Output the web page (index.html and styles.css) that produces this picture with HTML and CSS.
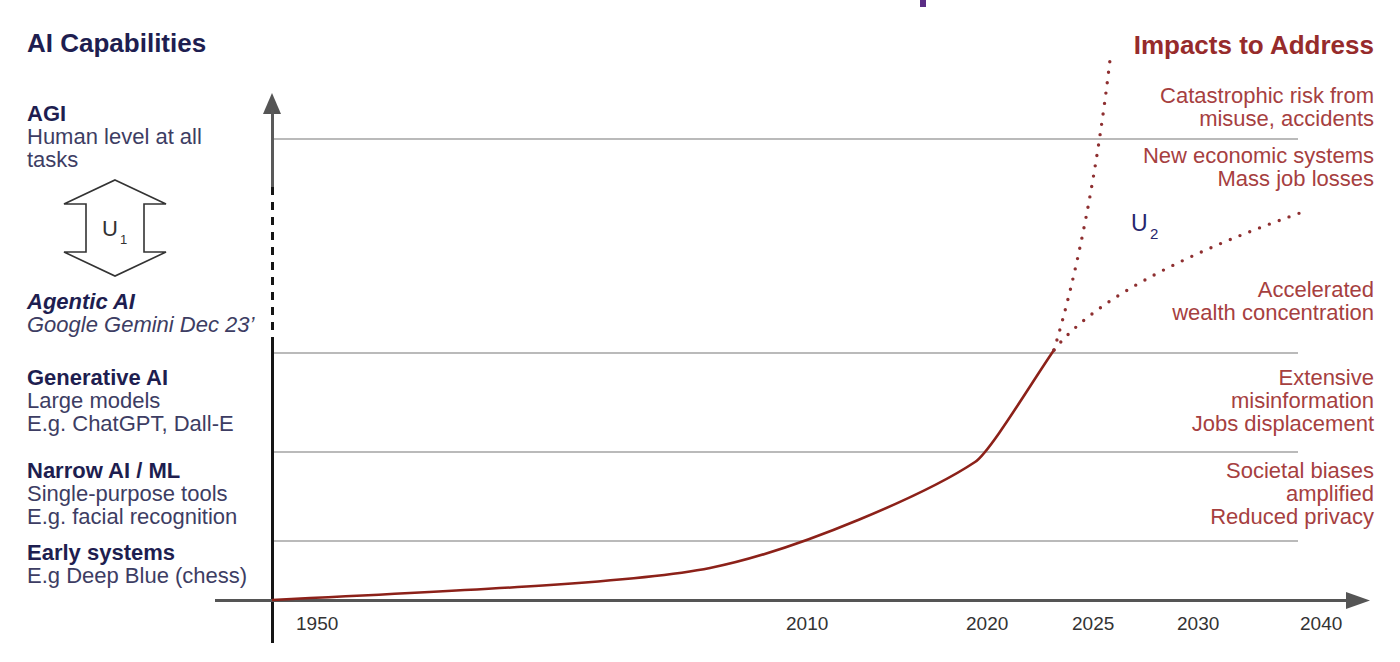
FILE: index.html
```html
<!DOCTYPE html>
<html lang="en">
<head>
<meta charset="utf-8">
<title>AI Capabilities and Impacts</title>
<link rel="stylesheet" href="styles.css">
</head>
<body>
<div class="stage">
  <svg class="chart" viewBox="0 0 1400 662" width="1400" height="662" aria-hidden="true">
    <!-- grid lines -->
    <g class="grid">
      <line x1="272" y1="139" x2="1298" y2="139"/>
      <line x1="272" y1="353" x2="1298" y2="353"/>
      <line x1="272" y1="452" x2="1298" y2="452"/>
      <line x1="272" y1="541" x2="1298" y2="541"/>
    </g>
    <!-- y axis -->
    <polygon class="axis-head" points="272,93 263,114 281,114"/>
    <line class="axis-grey" x1="272.5" y1="110" x2="272.5" y2="187"/>
    <line class="axis-dash" x1="272.5" y1="187" x2="272.5" y2="338"/>
    <line class="axis-black" x1="272.5" y1="338" x2="272.5" y2="643"/>
    <!-- x axis -->
    <line class="axis-x" x1="215" y1="600.5" x2="1350" y2="600.5"/>
    <polygon class="axis-head" points="1346,592 1370,600.5 1346,609"/>
    <!-- growth curve -->
    <path class="curve" d="M272,600 C480,590 640,582 710,568 C800,550 930,492 975,462 C990,452 1030,385 1054,350"/>
    <!-- projections -->
    <path class="dots" d="M1054,350 Q1090,230 1110,60"/>
    <path class="dots" d="M1054,350 Q1110,280 1300,213"/>
    <!-- labels -->
    <text class="u-label" x="1131" y="231">U</text>
    <text class="u-sub" x="1150" y="239">2</text>
    <g class="years">
      <text x="296" y="630">1950</text>
      <text x="786" y="630">2010</text>
      <text x="966" y="630">2020</text>
      <text x="1072" y="630">2025</text>
      <text x="1177" y="630">2030</text>
      <text x="1300" y="630">2040</text>
    </g>
  </svg>

  <div class="left">
    <h2 class="col-title">AI Capabilities</h2>
    <div class="level lvl-agi">
      <div class="lvl-name">AGI</div>
      <div>Human level at all<br>tasks</div>
    </div>
    <svg class="u1" viewBox="27 171 150 119" width="150" height="119" aria-hidden="true">
      <polygon points="115,180 166,204 144,204 144,252 166,252 115,276 64,252 86,252 86,204 64,204"/>
      <text class="u1-label" x="102" y="236">U</text>
      <text class="u1-sub" x="120" y="244">1</text>
    </svg>
    <div class="level lvl-agentic">
      <div class="lvl-name">Agentic AI</div>
      <div>Google Gemini Dec 23’</div>
    </div>
    <div class="level lvl-gen">
      <div class="lvl-name">Generative AI</div>
      <div>Large models<br>E.g. ChatGPT, Dall-E</div>
    </div>
    <div class="level lvl-narrow">
      <div class="lvl-name">Narrow AI / ML</div>
      <div>Single-purpose tools<br>E.g. facial recognition</div>
    </div>
    <div class="level lvl-early">
      <div class="lvl-name">Early systems</div>
      <div>E.g Deep Blue (chess)</div>
    </div>
  </div>

  <div class="mid">
    <div class="title-stub"></div>
  </div>

  <div class="right">
    <h2 class="col-title impacts-title">Impacts to Address</h2>
    <p class="impact imp-cat">Catastrophic risk from<br>misuse, accidents</p>
    <p class="impact imp-econ">New economic systems<br>Mass job losses</p>
    <p class="impact imp-wealth">Accelerated<br>wealth concentration</p>
    <p class="impact imp-info">Extensive<br>misinformation<br>Jobs displacement</p>
    <p class="impact imp-bias">Societal biases<br>amplified<br>Reduced privacy</p>
  </div>
</div>
</body>
</html>
```

FILE: styles.css
```css
* { box-sizing: border-box; }

html, body {
  margin: 0;
  padding: 0;
  background: #ffffff;
}

body {
  font-family: "Liberation Sans", Arial, Helvetica, sans-serif;
}

.stage {
  width: 1400px;
  height: 662px;
  overflow: hidden;
  display: grid;
  grid-template-columns: 272px 828px 300px;
  grid-template-rows: 662px;
}

.chart {
  grid-column: 1 / 4;
  grid-row: 1;
  display: block;
}

/* chart strokes */
.grid line {
  stroke: #a3a3a3;
  stroke-width: 1.6;
}
.axis-head { fill: #555555; }
.axis-grey { stroke: #5a5a5a; stroke-width: 3; }
.axis-dash { stroke: #151515; stroke-width: 3; stroke-dasharray: 8 7; }
.axis-black { stroke: #151515; stroke-width: 3; }
.axis-x { stroke: #555555; stroke-width: 3; }

.curve {
  fill: none;
  stroke: #8c2119;
  stroke-width: 2.6;
}
.dots {
  fill: none;
  stroke: #8e2f30;
  stroke-width: 3.4;
  stroke-linecap: round;
  stroke-dasharray: 0 10.5;
}

.u-label {
  font-family: "Liberation Sans", Arial, sans-serif;
  font-size: 23px;
  fill: #26266e;
}
.u-sub {
  font-family: "Liberation Sans", Arial, sans-serif;
  font-size: 15px;
  fill: #26266e;
}

.years text {
  font-family: "Liberation Sans", Arial, sans-serif;
  font-size: 19px;
  fill: #333333;
}

/* left column */
.left {
  grid-column: 1;
  grid-row: 1;
  padding-left: 27px;
  display: flex;
  flex-direction: column;
  font-size: 22px;
  line-height: 23px;
  color: #3d3d63;
  white-space: nowrap;
}

.col-title {
  margin: 28px 0 0 0;
  font-size: 26px;
  line-height: 30px;
  font-weight: bold;
  color: #1e1e50;
}

.lvl-name {
  font-weight: bold;
  color: #1e1e50;
}

.lvl-agi { margin-top: 44px; }
.lvl-agentic { font-style: italic; }
.lvl-gen { margin-top: 30px; }
.lvl-narrow { margin-top: 24px; }
.lvl-early { margin-top: 13px; }

.u1 {
  display: block;
}
.u1 polygon {
  fill: #ffffff;
  stroke: #333333;
  stroke-width: 1.6;
  stroke-linejoin: miter;
}
.u1-label {
  font-family: "Liberation Sans", Arial, sans-serif;
  font-size: 22px;
  fill: #333333;
}
.u1-sub {
  font-family: "Liberation Sans", Arial, sans-serif;
  font-size: 13px;
  fill: #333333;
}

/* middle stub of the cropped slide title */
.mid {
  grid-column: 2;
  grid-row: 1;
}
.title-stub {
  width: 6px;
  height: 7px;
  margin-left: 648px;
  background: #5b2d85;
}

/* right column */
.right {
  grid-column: 3;
  grid-row: 1;
  padding-right: 26px;
  display: flex;
  flex-direction: column;
  align-items: flex-end;
  text-align: right;
  white-space: nowrap;
}

.impacts-title {
  margin-top: 30px;
  color: #962b2b;
}

.impact {
  margin: 0;
  font-size: 22px;
  line-height: 23px;
  color: #a6403f;
}
.imp-cat { margin-top: 24px; }
.imp-econ { margin-top: 14px; }
.imp-wealth { margin-top: 88px; }
.imp-info { margin-top: 42px; }
.imp-bias { margin-top: 24px; }
```
